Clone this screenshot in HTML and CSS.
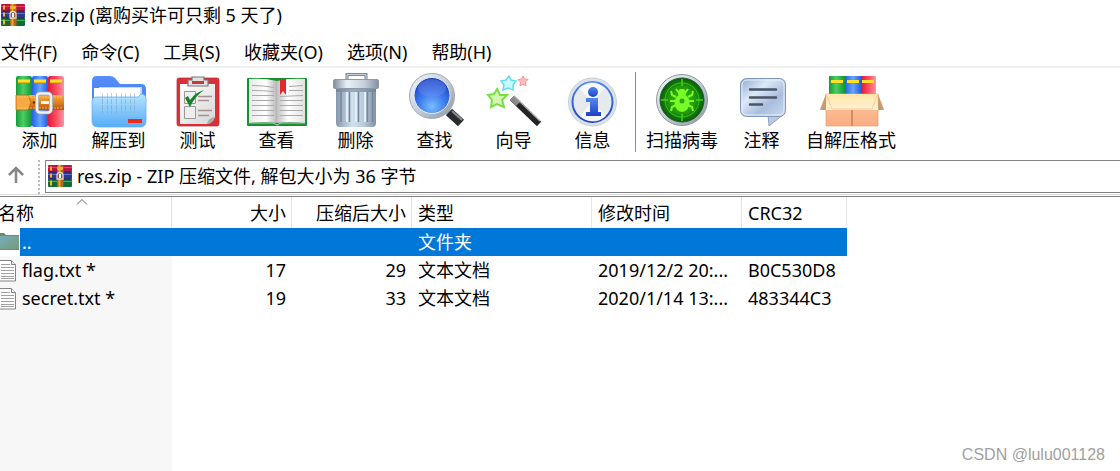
FILE: index.html
```html
<!DOCTYPE html>
<html lang="zh-CN">
<head>
  <meta charset="UTF-8" />
  <meta name="viewport" content="width=device-width, initial-scale=1.0" />
  <title>res.zip</title>
  <link rel="stylesheet" href="styles.css">
</head>
<body>
  <!-- shared shapes and gradients -->
  <svg class="defs" width="0" height="0" aria-hidden="true">
    <defs>
      <linearGradient id="gGreen"><stop offset="0" stop-color="#159a38"/><stop offset=".45" stop-color="#4bd062"/><stop offset="1" stop-color="#139235"/></linearGradient>
      <linearGradient id="gBlue"><stop offset="0" stop-color="#2463e0"/><stop offset=".5" stop-color="#63a5ff"/><stop offset="1" stop-color="#2460dc"/></linearGradient>
      <linearGradient id="gRed"><stop offset="0" stop-color="#e01638"/><stop offset=".5" stop-color="#ff4c60"/><stop offset="1" stop-color="#f897a8"/></linearGradient>
      <linearGradient id="gBelt" x2="0" y2="1"><stop offset="0" stop-color="#f7ad45"/><stop offset=".5" stop-color="#e1811d"/><stop offset="1" stop-color="#b55408"/></linearGradient>
      <linearGradient id="gSilver" x2="1" y2="1"><stop offset="0" stop-color="#f4f7fa"/><stop offset=".5" stop-color="#c6d0da"/><stop offset="1" stop-color="#8793a0"/></linearGradient>
      <linearGradient id="gBack" x2="0" y2="1"><stop offset="0" stop-color="#568cf8"/><stop offset="1" stop-color="#3c7fed"/></linearGradient>
      <linearGradient id="gFront" x2="0" y2="1"><stop offset="0" stop-color="#b8e4ff"/><stop offset="1" stop-color="#55acf8"/></linearGradient>
      <linearGradient id="gPaper" x2="1" y2="1"><stop offset="0" stop-color="#ffffff"/><stop offset="1" stop-color="#d6d6d6"/></linearGradient>
      <linearGradient id="gPageL"><stop offset="0" stop-color="#e8e8e8"/><stop offset=".6" stop-color="#ffffff"/><stop offset="1" stop-color="#b5b5b5"/></linearGradient>
      <linearGradient id="gPageR"><stop offset="0" stop-color="#c0c0c0"/><stop offset=".4" stop-color="#ffffff"/><stop offset="1" stop-color="#e2e2e2"/></linearGradient>
      <linearGradient id="gBin"><stop offset="0" stop-color="#8496aa"/><stop offset=".4" stop-color="#d3e1ee"/><stop offset=".7" stop-color="#b8c9d9"/><stop offset="1" stop-color="#8192a5"/></linearGradient>
      <linearGradient id="gLid"><stop offset="0" stop-color="#7d8b9b"/><stop offset=".3" stop-color="#e9f1f8"/><stop offset=".7" stop-color="#c2ceda"/><stop offset="1" stop-color="#8390a0"/></linearGradient>
      <radialGradient id="gLens" cy=".8" r=".8"><stop offset="0" stop-color="#78bcff"/><stop offset=".5" stop-color="#3977ed"/><stop offset="1" stop-color="#1538b5"/></radialGradient>
      <linearGradient id="gInfo" x2="0" y2="1"><stop offset="0" stop-color="#5389ee"/><stop offset="1" stop-color="#1c41c6"/></linearGradient>
      <radialGradient id="gScan"><stop offset="0" stop-color="#35c800"/><stop offset=".6" stop-color="#239a0b"/><stop offset="1" stop-color="#075c08"/></radialGradient>
      <linearGradient id="gNote" x2="1" y2="1"><stop offset="0" stop-color="#8ea8cd"/><stop offset=".35" stop-color="#dce8f8"/><stop offset=".65" stop-color="#a9bedd"/><stop offset="1" stop-color="#ccdaee"/></linearGradient>
      <linearGradient id="gFlap" x2="0" y2="1"><stop offset="0" stop-color="#ffe7a8"/><stop offset="1" stop-color="#fff1d4"/></linearGradient>
      <linearGradient id="gBox" x2="0" y2="1"><stop offset="0" stop-color="#ffc49a"/><stop offset="1" stop-color="#f9ae84"/></linearGradient>
      <linearGradient id="gFolder" x2="1" y2="1"><stop offset="0" stop-color="#78aebb"/><stop offset="1" stop-color="#759974"/></linearGradient>
    </defs>
    <symbol id="rar" viewBox="0 0 24 22">
      <rect width="24" height="7" rx="1" fill="#b91540"/><rect y="2" width="24" height="1" fill="#ed416c"/>
      <rect y="7" width="24" height="7" rx="1" fill="#303790"/><rect y="9" width="24" height="1" fill="#646bd0"/>
      <rect y="14" width="24" height="8" rx="1" fill="#116c34"/><rect y="16" width="24" height="1" fill="#35b760"/>
      <path d="M0 7h24M0 14h24" stroke="#221a42" stroke-width=".7"/>
      <path d="M3 1.500v4M3 8.500v4M3 15.500v5" stroke="#ffb325" stroke-width="2"/>
      <rect x="9" width="6.500" height="22" rx="1" fill="#b3661a"/><path d="M11.500 0v22" stroke="#f4a339" stroke-width="2"/>
      <rect x="9" y="2" width="6" height="3" rx="1" fill="#eeb337"/>
      <path d="M9 14V10.500a3 3 0 0 1 6 0V14z" fill="#8a5a30" stroke="#d9d5c8" stroke-width="1.300"/>
      <rect x="11" y="9" width="2" height="4" fill="#ffffff"/>
    </symbol>
    <symbol id="doc" viewBox="0 0 20 28">
      <path d="M-2 4.500h13.500l4 4v16.500H-2z" fill="#fff" stroke="#838383"/>
      <path d="M11.500 4.500v4h4" fill="#eee" stroke="#838383"/>
      <path d="M1 8.500h9M1 11.500h13M1 14.500h13M1 17.500h13M1 20.500h13M1 22.500h13" stroke="#a0a0a0"/>
    </symbol>
  </svg>

  <header class="titlebar">
    <svg class="rar-icon" aria-hidden="true"><use href="#rar"/></svg>
    <span>res.zip (离购买许可只剩 5 天了)</span>
  </header>

  <nav class="menubar">
    <button type="button">文件(F)</button>
    <button type="button">命令(C)</button>
    <button type="button">工具(S)</button>
    <button type="button">收藏夹(O)</button>
    <button type="button">选项(N)</button>
    <button type="button">帮助(H)</button>
  </nav>

  <div class="toolbar">
    <button type="button" class="tool">
      <svg viewBox="0 0 79 56" aria-hidden="true">
        <rect x="16" y="4" width="16" height="51" rx="2" fill="url(#gGreen)"/>
        <rect x="32" y="4" width="16" height="51" rx="2" fill="url(#gBlue)"/>
        <rect x="48" y="4" width="16" height="51" rx="2" fill="url(#gRed)"/>
        <path d="M18 9.500h12M34 9.500h12M50 9.500h12" stroke="#c18a12" stroke-width="4"/>
        <path d="M18 9h12M34 9h12M50 9h12" stroke="#ffdf28" stroke-width="3"/>
        <path d="M16 23h48v15H16z" fill="url(#gBelt)"/>
        <path d="M16 23h12l3 7.500-3 7.500H16z" fill="#f7aa40" stroke="#b2630f" stroke-width=".7"/>
        <path d="M18 25h44M18 36h44" stroke="#ffd08a" stroke-width=".7" stroke-dasharray="2 1"/>
        <circle cx="34" cy="30.500" r="1.300" fill="#633200"/>
        <rect x="37" y="21.500" width="14" height="19" rx="3" fill="none" stroke="#969ca2" stroke-width="4"/>
        <rect x="37" y="21.500" width="14" height="19" rx="3" fill="none" stroke="#eef1f3" stroke-width="2.500"/>
        <path d="M41 30.500h8" stroke="#f5f5f5" stroke-width="3"/>
      </svg>
      <span>添加</span>
    </button>
    <button type="button" class="tool">
      <svg viewBox="0 0 79 56" aria-hidden="true">
        <path d="M13 9q0-5 5-5h13q3 0 5 2l5 6h21q5 0 5 5v30H13z" fill="url(#gBack)"/>
        <path d="M20 15h43v22H20z" fill="#c9d7e6"/>
        <path d="M15 16h46v22H15z" fill="#fff"/>
        <path d="M13 29q0-4 4-4h42l3-3q5 0 5 5v22q0 6-6 6H19q-6 0-6-6z" fill="url(#gFront)" stroke="#64b2f0" stroke-width=".8"/>
        <path d="M23.500 21v20M28.500 21v20M32.500 21v20M37.500 21v20M42.500 21v20M46.500 21v20M51.500 21v20M55.500 21v20" stroke="#8294a8" stroke-opacity=".45" stroke-dasharray="5 1"/>
        <rect x="49" y="47" width="14" height="4" fill="#ee2b16"/>
      </svg>
      <span>解压到</span>
    </button>
    <button type="button" class="tool">
      <svg viewBox="0 0 79 56" aria-hidden="true">
        <rect x="19" y="6" width="42" height="48" rx="2" fill="#da3037" stroke="#b6262c" stroke-width=".7"/>
        <path d="M22 12h35v33q-2 6-8 7H22z" fill="url(#gPaper)"/>
        <path d="M49 52q1-6 8-7-2 6-8 7z" fill="#aaa"/>
        <path d="M30 14V8h4V5h12v3h4v6z" fill="#e1e1e1" stroke="#777" stroke-width="1.200"/>
        <path d="M34 9h12v3H34z" fill="#c03b3b"/>
        <path d="M26.500 19.500h11v12h-11zM26.500 34.500h11v12h-11z" fill="#eee" stroke="#999"/>
        <path d="M40 24.500h14M40 28.500h11M40 38.500h14M40 43.500h11" stroke="#a89090" stroke-width="1.500"/>
        <path d="M27 26l3-2 2 4Q38 20 46 18q-9 6-14 17z" fill="#17802a"/>
      </svg>
      <span>测试</span>
    </button>
    <button type="button" class="tool">
      <svg viewBox="0 0 79 56" aria-hidden="true">
        <rect x="10" y="6" width="60" height="48" rx="1" fill="#15922b"/>
        <path d="M12 7q16-1 28 2v42q-12-2-28 0z" fill="url(#gPageL)"/>
        <path d="M40 9q12-3 28-2v44q-16-2-28 0z" fill="url(#gPageR)"/>
        <path d="M12 51h24l4 2 4-2h24" fill="none" stroke="#c9c9c9"/>
        <path d="M15 13.500q12 0 22 2M15 18.500q12 0 22 1M15 23.500h22M15 28.500h22M15 33.500h22M15 38.500h22M15 43.500h22M52 14.500l14-1M52 18.500h14M43 24.500l23-1M43 28.500h23M43 33.500h23M43 38.500h23M43 43.500h23" fill="none" stroke="#a9a9a9"/>
        <path d="M43 7h6v16l-3-4-3 4z" fill="#d92b32"/>
      </svg>
      <span>查看</span>
    </button>
    <button type="button" class="tool">
      <svg viewBox="0 0 79 56" aria-hidden="true">
        <path d="M31 8V2.500h19V8" fill="none" stroke="#78899a" stroke-width="3"/>
        <path d="M31 8V2.500h19V8" fill="none" stroke="#c2d0df"/>
        <path d="M20 15h40v36q0 4-4 4H24q-4 0-4-4z" fill="url(#gBin)"/>
        <path d="M25 20v30M33.500 20v30M42.500 20v30M51.500 20v30M56.500 20v30" fill="none" stroke="#74879c" stroke-width="1.500"/>
        <path d="M31 20v30M40 20v30M49 20v30" stroke="#e3eef7" stroke-width="2"/>
        <path d="M20 17h40v3H20z" fill="#5f7183" opacity=".5"/>
        <rect x="17.500" y="7.500" width="45" height="9" rx="1.500" fill="url(#gLid)" stroke="#8b98a5"/>
      </svg>
      <span>删除</span>
    </button>
    <button type="button" class="tool">
      <svg viewBox="0 0 79 56" aria-hidden="true">
        <path d="M51 38l5 5" stroke="#a7b1bb" stroke-width="6"/>
        <path d="M54 40l12 11" stroke="#292b30" stroke-width="9"/>
        <path d="M57 39l10 9" stroke="#8b8c92" stroke-width="2"/>
        <circle cx="37" cy="24" r="22.500" fill="url(#gSilver)" stroke="#9da8b4"/>
        <circle cx="37" cy="23.500" r="18" fill="url(#gLens)" stroke="#e9eff5"/>
        <ellipse cx="37" cy="16" rx="14" ry="9" fill="#7892f0" opacity=".4"/>
      </svg>
      <span>查找</span>
    </button>
    <button type="button" class="tool">
      <svg viewBox="0 0 79 56" aria-hidden="true">
        <path d="M23 17l3 6 7 0-5 5 2 7-7-3-6 3 1-7-4-5 6-1z" fill="#d4f8b4" stroke="#77df44" stroke-width="2"/>
        <path d="M35 4l2 4 5 1-3 4 0 5-5-2-5 2 1-5-3-4 5-1z" fill="#c9faff" stroke="#62ddef" stroke-width="1.500"/>
        <path d="M49 4l1.500 3 3.500.500-2.500 2.500.500 4-3-2-3 2 .500-4-2.500-2.500 3.500-.500z" fill="#ffc0bb" stroke="#f59592"/>
        <path d="M38 26l27 26" stroke="#242424" stroke-width="6"/>
        <path d="M38 26l6 6" stroke="#888" stroke-width="6"/>
        <path d="M40 24l26 25" stroke="#aaa" stroke-width="1.500"/>
      </svg>
      <span>向导</span>
    </button>
    <button type="button" class="tool">
      <svg viewBox="0 0 79 56" aria-hidden="true">
        <circle cx="39.500" cy="30" r="24" fill="#dce2e8" stroke="#c8d0d8"/>
        <circle cx="39.500" cy="30" r="20" fill="#e6eaef" stroke="url(#gInfo)" stroke-width="2"/>
        <path d="M39 30L26 16q13-11 26 0zM39 30l14 14q-12 11-26 0z" fill="#fff" opacity=".65"/>
        <circle cx="40" cy="20" r="5" fill="url(#gInfo)"/>
        <path d="M33 26h12v14h3v4H33v-4h4V30h-4z" fill="url(#gInfo)"/>
      </svg>
      <span>信息</span>
    </button>
    <div class="separator"></div>
    <button type="button" class="tool tool-scan">
      <svg viewBox="0 0 80 56" aria-hidden="true">
        <circle cx="40" cy="28" r="25.500" fill="url(#gSilver)" stroke="#8d989f"/>
        <circle cx="40" cy="28" r="22" fill="url(#gScan)" stroke="#225b24"/>
        <circle cx="40" cy="28" r="17" fill="none" stroke="#38c118"/>
        <path d="M40 7v7M40 42v7M19 28h7M54 28h7" stroke="#42d422" stroke-width="1.500"/>
        <g fill="none" stroke="#7afa2a" stroke-width="2"><path d="M34 25l-4-2-1-4M46 25l4-2 1-4M33 29h-5M47 29h5M34 33l-4 2-1 4M46 33l4 2 1 4M37 21l-3-4M43 21l3-4"/></g>
        <circle cx="40" cy="21" r="4" fill="#7afa2a"/>
        <ellipse cx="40" cy="31" rx="7.500" ry="9" fill="#7afa2a"/>
        <circle cx="40" cy="29" r="2.500" fill="#2bab0b"/>
      </svg>
      <span>扫描病毒</span>
    </button>
    <button type="button" class="tool">
      <svg viewBox="0 0 79 56" aria-hidden="true">
        <path d="M46 42h16l-15 12z" fill="#bdc9dc" stroke="#8fa1bd"/>
        <rect x="18.500" y="6.500" width="45" height="38" rx="6" fill="url(#gNote)" stroke="#7e96b9"/>
        <rect x="20" y="8" width="42" height="35" rx="5" fill="none" stroke="#e5effb"/>
        <path d="M28 17.500h26M28 25.500h26M28 32.500h12" stroke="#495465" stroke-width="2.500" stroke-linecap="round"/>
      </svg>
      <span>注释</span>
    </button>
    <button type="button" class="tool tool-sfx">
      <svg viewBox="0 0 100 56" aria-hidden="true">
        <path d="M28 4h16v20H28z" fill="url(#gGreen)"/>
        <path d="M44 4h16v20H44z" fill="url(#gBlue)"/>
        <path d="M60 4h15v20H60z" fill="url(#gRed)"/>
        <path d="M30 9.500h12M46 9.500h12M61 9.500h12" stroke="#ffdf28" stroke-width="3"/>
        <path d="M25 22h52v32H25z" fill="url(#gBox)" stroke="#e5a06f" stroke-width=".7"/>
        <path d="M51 37v17" stroke="#d98a60" stroke-width="2"/>
        <path d="M25 22h52l6 14-6 2H25l-6-2z" fill="url(#gFlap)"/>
        <path d="M25 22l-6 16h6zM77 22l6 16h-6z" fill="#c99a72"/>
        <path d="M25 22l6 15h40l6-15" fill="none" stroke="#eec08f" stroke-width=".8"/>
      </svg>
      <span>自解压格式</span>
    </button>
  </div>

  <div class="address-row">
    <button type="button" class="up" aria-label="向上">
      <svg viewBox="0 0 18 18" aria-hidden="true"><path d="M9 17V2M2 9l7-7 7 7" fill="none" stroke="#868686" stroke-width="2.500"/></svg>
    </button>
    <div class="grip"></div>
    <div class="address">
      <svg class="rar-icon" aria-hidden="true"><use href="#rar"/></svg>
      <input type="text" aria-label="地址" value="res.zip - ZIP 压缩文件, 解包大小为 36 字节">
    </div>
  </div>

  <main class="file-list">
    <table>
      <colgroup>
        <col class="col-name"><col class="col-size"><col class="col-size"><col class="col-type"><col class="col-date"><col class="col-crc">
      </colgroup>
      <thead>
        <tr>
          <th class="name">名称<svg class="sort" viewBox="0 0 12 6" aria-hidden="true"><path d="M1 5.500l5-5 5 5" fill="none" stroke="#666"/></svg></th>
          <th class="num">大小</th>
          <th class="num">压缩后大小</th>
          <th>类型</th>
          <th>修改时间</th>
          <th>CRC32</th>
        </tr>
      </thead>
      <tbody>
        <tr class="selected">
          <td class="name"><div class="entry"><svg class="file-icon" viewBox="0 0 20 28" aria-hidden="true"><path d="M0 5h4l2 2h13v15H0z" fill="#718b62"/><path d="M0 8h19v13H0z" fill="url(#gFolder)"/></svg>..</div></td>
          <td class="num"></td>
          <td class="num"></td>
          <td>文件夹</td>
          <td></td>
          <td></td>
        </tr>
        <tr>
          <td class="name"><div class="entry"><svg class="file-icon" aria-hidden="true"><use href="#doc"/></svg>flag.txt *</div></td>
          <td class="num">17</td>
          <td class="num">29</td>
          <td>文本文档</td>
          <td>2019/12/2 20:...</td>
          <td>B0C530D8</td>
        </tr>
        <tr>
          <td class="name"><div class="entry"><svg class="file-icon" aria-hidden="true"><use href="#doc"/></svg>secret.txt *</div></td>
          <td class="num">19</td>
          <td class="num">33</td>
          <td>文本文档</td>
          <td>2020/1/14 13:...</td>
          <td>483344C3</td>
        </tr>
      </tbody>
    </table>
  </main>

  <div class="watermark">CSDN @lulu001128</div>
</body>
</html>
```
FILE: styles.css
```css
:root {
  --name-width: 172px;
  --row-height: 28px;
}

* {
  box-sizing: border-box;
  margin: 0;
  padding: 0;
}

body {
  display: flex;
  flex-direction: column;
  min-height: 100vh;
  position: relative;
  background: #fff;
  color: #000;
  font-family: "Noto Sans", "Noto Sans CJK SC", sans-serif;
  font-size: 18px;
  line-height: 24px;
  overflow-x: hidden;
}

button,
input {
  font: inherit;
  color: inherit;
  border: none;
  background: none;
}

svg {
  display: block;
  flex-shrink: 0;
}

.defs {
  position: absolute;
}

.rar-icon {
  width: 24px;
  height: 22px;
}

.titlebar {
  display: flex;
  align-items: center;
  gap: 5px;
  height: 30px;
  padding-left: 1px;
  white-space: nowrap;
}

.menubar {
  display: flex;
  align-items: center;
  gap: 24px;
  height: 38px;
  padding: 8px 1px 0;
  border-bottom: 2px solid #f0f0f0;
  white-space: nowrap;
}

.toolbar {
  display: flex;
  padding: 4px 0;
}

.tool {
  width: 79px;
  flex-shrink: 0;
  white-space: nowrap;
}

.tool svg {
  width: 100%;
  height: 56px;
}

.tool span {
  display: block;
}

.tool-scan {
  width: 80px;
}

.tool-sfx {
  width: 100px;
}

.separator {
  width: 1px;
  margin: 0 6px 0 3px;
  background: #8c8c8c;
}

.address-row {
  display: flex;
  height: 41px;
  padding-top: 4px;
  border-bottom: 1px solid #828282;
  box-shadow: inset 0 -1px #fff, inset 0 -2px #dcdcdc;
}

.up {
  display: flex;
  justify-content: center;
  width: 32px;
  padding-top: 6px;
}

.up svg {
  width: 18px;
  height: 18px;
}

.grip {
  width: 2px;
  height: 34px;
  margin: 0 5px 0 6px;
  background: repeating-linear-gradient(#bbb 0 2px, #fff 2px 4px);
}

.address {
  display: flex;
  align-items: center;
  gap: 5px;
  flex: 1;
  height: 33px;
  padding: 0 0 2px 2px;
  border: 1px solid #828282;
  border-right: none;
}

.address input {
  flex: 1;
  min-width: 0;
  outline: none;
}

.file-list {
  flex: 1;
  background: linear-gradient(#f7f7f7, #f7f7f7) no-repeat 0 0 / var(--name-width) 100%;
}

table {
  table-layout: fixed;
  width: 847px;
  border-spacing: 0;
  white-space: nowrap;
}

.col-name { width: var(--name-width); }
.col-size { width: 120px; }
.col-type { width: 180px; }
.col-date { width: 150px; }
.col-crc { width: 105px; }

th {
  height: 31px;
  padding: 1px 6px 0;
  background: #fff;
  border-right: 1px solid #e5e5e5;
  font-weight: normal;
  text-align: left;
}

td {
  height: var(--row-height);
  padding: 0 6px;
}

.num {
  text-align: right;
}

th.num {
  padding-right: 5px;
}

th.name {
  position: relative;
  padding-left: 0;
  text-indent: -2px;
}

td.name {
  padding-left: 0;
}

.sort {
  position: absolute;
  top: 2px;
  left: 76px;
  width: 12px;
  height: 6px;
}

.entry {
  display: flex;
  align-items: center;
  gap: 2px;
}

.file-icon {
  width: 20px;
  height: var(--row-height);
}

.selected {
  background: #0078d9;
  color: #fff;
}

.selected .file-icon {
  background: #fff;
}

.watermark {
  position: absolute;
  right: 15px;
  bottom: 4px;
  color: #a0a0a0;
  font-family: "Liberation Sans", sans-serif;
  font-size: 16px;
}
```
